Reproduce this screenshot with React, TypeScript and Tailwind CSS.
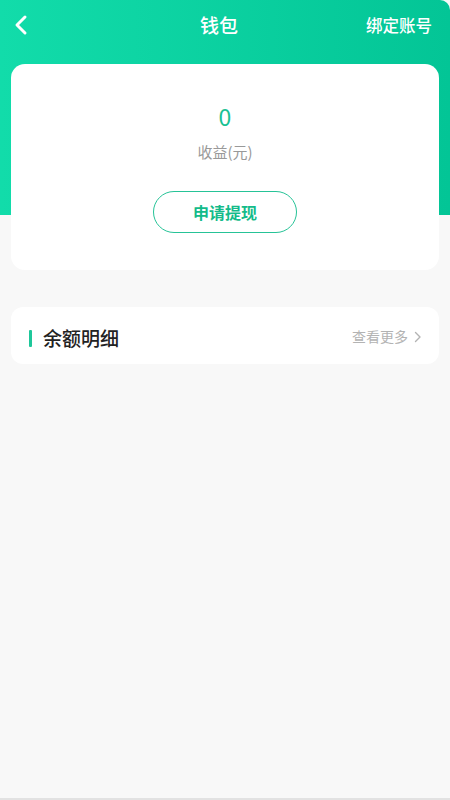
import React from "react";

export default function App() {
  return (
    <div
      className="w-[450px] h-[800px] bg-[#f8f8f8] flex flex-col overflow-hidden"
      style={{ fontFamily: '"Noto Sans CJK SC", "Noto Sans", sans-serif' }}
    >
      <div className="h-[215px] shrink-0 rounded-tr-[10px] bg-gradient-to-r from-[#12dcaa] to-[#03c596]">
        <div className="h-[50px] flex items-center justify-between px-[14px] relative">
          <svg width="14" height="22" viewBox="0 0 14 22">
            <path d="M11 3 L3 11 L11 19" fill="none" stroke="#fff" strokeWidth="3" strokeLinecap="round" strokeLinejoin="round" />
          </svg>
          <div className="absolute left-0 right-[12px] text-center text-white text-[19px] font-medium pointer-events-none leading-[50px]">
            钱包
          </div>
          <div className="text-white text-[16.5px] font-medium mr-[4px]">绑定账号</div>
        </div>
      </div>

      <div className="mx-[11px] -mt-[151px] bg-white rounded-[14px] h-[206px] flex flex-col items-center pt-[36px]">
        <div className="text-[23px] leading-[32px] text-[#19c193]">0</div>
        <div className="mt-[9px] text-[15px] leading-[22px] text-[#999999]">收益(元)</div>
        <div className="mt-[28px] w-[144px] h-[42px] rounded-full border-[1.5px] border-[#26c397] flex items-center justify-center text-[16px] font-bold text-[#14bb8a]">
          申请提现
        </div>
      </div>

      <div className="mx-[11px] mt-[37px] bg-white rounded-[12px] h-[57px] flex items-center pl-[18px] pr-[17px] pt-[5px]">
        <div className="w-[3px] h-[17px] bg-[#1ec79a] rounded-[1px]" />
        <div className="ml-[11px] text-[19px] font-medium text-[#222222]">余额明细</div>
        <div className="ml-auto flex items-center text-[14px] text-[#b3b3b3] -mt-[3px]">
          <span>查看更多</span>
          <svg width="8" height="12" viewBox="0 0 8 12" className="ml-[6px]">
            <path d="M1.5 1.5 L6 6 L1.5 10.5" fill="none" stroke="#b3b3b3" strokeWidth="1.4" strokeLinecap="round" strokeLinejoin="round" />
          </svg>
        </div>
      </div>

      <div className="flex-1" />
      <div className="h-[2px] bg-[#e2e2e2] shrink-0" />
    </div>
  );
}
